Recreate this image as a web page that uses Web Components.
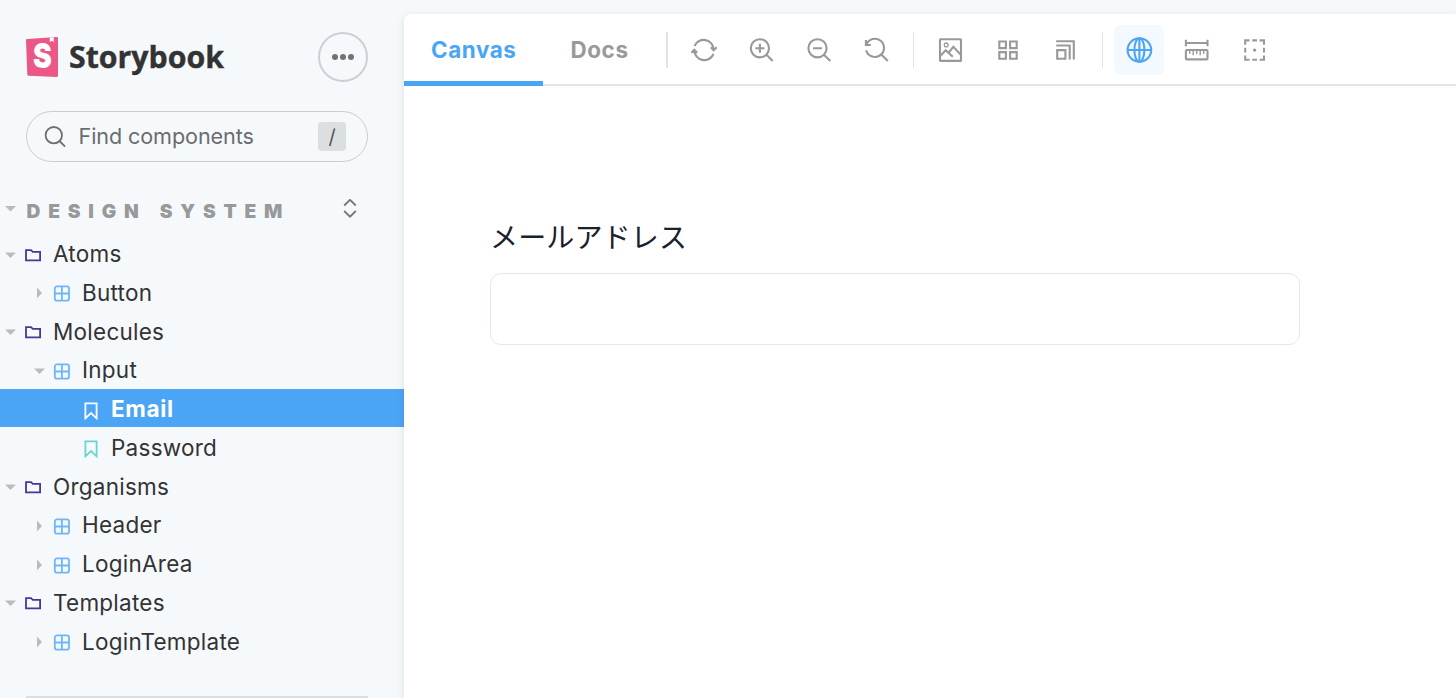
<!DOCTYPE html>
<html lang="ja">
<head>
<meta charset="utf-8">
<title>Storybook</title>
<style>
html,body{margin:0;height:100%;overflow:hidden;background:#f6f9fc}
body{font-family:Inter,"Noto Sans CJK JP",sans-serif;color:#333}
</style>
</head>
<body>
<sb-app>
  <sb-sidebar slot="sidebar">
    <sb-row kind="folder" open>Atoms</sb-row>
    <sb-row kind="component" level="1">Button</sb-row>
    <sb-row kind="folder" open>Molecules</sb-row>
    <sb-row kind="component" level="1" open>Input</sb-row>
    <sb-row kind="story" level="2" selected>Email</sb-row>
    <sb-row kind="story" level="2">Password</sb-row>
    <sb-row kind="folder" open>Organisms</sb-row>
    <sb-row kind="component" level="1">Header</sb-row>
    <sb-row kind="component" level="1">LoginArea</sb-row>
    <sb-row kind="folder" open>Templates</sb-row>
    <sb-row kind="component" level="1">LoginTemplate</sb-row>
  </sb-sidebar>
  <sb-toolbar slot="toolbar"></sb-toolbar>
  <sb-field slot="canvas">メールアドレス</sb-field>
</sb-app>
<script>
const define = (name, render) => customElements.define(name, class extends HTMLElement {
  connectedCallback() {
    if (this.shadowRoot) return;
    this.attachShadow({mode: 'open'}).innerHTML = render(this);
  }
});

const toolIcons = {
  sync: '<path d="M4.5 10A10 10 0 0 1 23.7 14M20.8 11.3l2.9 3 2.9-3M23.5 18A10 10 0 0 1 4.3 14M1.4 16.7l2.9-3 2.9 3"/>',
  zoomin: '<circle cx="11.9" cy="12.3" r="9.1"/><path d="M18.4 18.8l6.3 6.3M7.4 12.3h9M11.9 7.8v9"/>',
  zoomout: '<circle cx="12.5" cy="12.3" r="9.1"/><path d="M19 18.8l6.3 6.3M8 12.3h9"/>',
  zoomreset: '<path d="M3.4 8.6A9.1 9.1 0 1 1 3.1 14.2M2.9 4v5h5M18.5 18.8l6.3 6.3"/>',
  photo: '<rect x="3" y="3.3" width="21" height="21.6" rx=".5"/><circle cx="9.2" cy="8.9" r="1.9" stroke-width="1.3"/><path d="M3 20.2l5.7-6 7.1 6.6M11.7 16.5l4.7-5.6 7.4 8"/>',
  grid: '<path d="M5.3 5.5h6.6v6.6H5.3zM16.1 5.5h6.6v6.6h-6.6zM5.3 16.1h6.6v6.6H5.3zM16.1 16.1h6.6v6.6h-6.6z"/>',
  grow: '<path d="M5.2 14.1h8.2v8.6H5.2zM4.2 9.5h13.5v14M4.2 5.2h17.6v18.3"/>',
  globe: '<circle cx="14.4" cy="14" r="11.8"/><ellipse cx="14.4" cy="14" rx="5" ry="11.8"/><path d="M2.5 14h23.8M14.4 2v24"/>',
  ruler: '<path d="M2.9 7h21.6M2.9 3.8v6.4M24.5 3.8v6.4"/><rect x="2.9" y="14" width="21.6" height="9.4" rx="1"/><path stroke-width="1.4" d="M6.7 15v3M10.2 15v4.2M13.7 15v3M17.2 15v4.2M20.7 15v3"/>',
  outline: '<path d="M5.2 8.8V4.4h4.4M19.6 4.4H24v4.4M24 19.4v4.4h-4.4M9.6 23.8H5.2v-4.4M12.2 4.4H17M12.2 23.8H17M5.2 11.7v4.8M24 11.7v4.8"/><circle cx="14.6" cy="14.1" r="1.7" fill="currentColor" stroke="none"/>'
};

define('sb-tool', el => `
<style>
:host{display:flex;align-items:center;justify-content:center;width:50px;height:50px;border-radius:7px;color:#999}
:host([active]){background:#f3f9ff;color:#4ba5f7}
svg{fill:none;stroke:currentColor;stroke-width:2.1}
</style><svg width="28" height="28">${toolIcons[el.getAttribute('icon')]}</svg>`);

define('sb-toolbar', () => `
<style>
:host{display:flex;height:72px;box-sizing:border-box;border-bottom:2px solid #e3e5e7;align-items:flex-start}
.tab{box-sizing:border-box;height:72px;padding:4px 0 0 27px;display:flex;align-items:center;color:#999;font-weight:700;font-size:22.4px;letter-spacing:.6px;border-bottom:5px solid transparent;white-space:nowrap}
.canvas{width:139px;color:#4ba5f7;border-color:#4ba5f7}
.docs{width:123px;padding-left:27.5px}
i{width:1px;height:36px;margin-top:18px;background:#e3e3e3}
.first{width:2px}
.g{display:flex;gap:7.6px;padding-top:11px}
.g1{margin-left:11px}.g2{margin-left:12px}.g3{margin-left:11px}
</style>
<div class="tab canvas">Canvas</div><div class="tab docs">Docs</div><i class="first"></i>
<div class="g g1"><sb-tool icon="sync"></sb-tool><sb-tool icon="zoomin"></sb-tool><sb-tool icon="zoomout"></sb-tool><sb-tool icon="zoomreset"></sb-tool></div><i style="margin-left:11px"></i>
<div class="g g2"><sb-tool icon="photo"></sb-tool><sb-tool icon="grid"></sb-tool><sb-tool icon="grow"></sb-tool></div><i style="margin-left:11px"></i>
<div class="g g3"><sb-tool icon="globe" active></sb-tool><sb-tool icon="ruler"></sb-tool><sb-tool icon="outline"></sb-tool></div>`);

define('sb-field', () => `
<style>
:host{display:block;padding:129px 86px 0}
label{display:block;font:400 28px/42px "Noto Sans CJK JP",sans-serif;color:#1a202c;height:42px;letter-spacing:.15px;white-space:nowrap}
input{display:block;box-sizing:border-box;width:810px;height:72px;margin:16px 0 0;border:1px solid #e2e8f0;border-radius:11px;background:#fff;outline:none}
</style><label for="mail"><slot></slot></label><input id="mail" type="email">`);

const rowIcons = {
  folder: '<svg width="18" height="16"><path d="M2 3.2h5l1.8 1.7h7.3v8.5H2z"/></svg>',
  component: '<svg width="18" height="18"><rect x="1.8" y="2.4" width="14.2" height="14.2" rx="2.2"/><path d="M8.9 2.3v14.4M1.8 9.5H16"/></svg>',
  story: '<svg width="18" height="20"><path d="M3.4 3.4h11.2v14.9L9 13.1l-5.6 5.2z"/></svg>'
};
define('sb-row', el => {
  const lv = +(el.getAttribute('level') || 0), open = el.hasAttribute('open'), kind = el.getAttribute('kind');
  const arrow = kind === 'story' ? '' : open ? '<path d="M0 3.4h11L5.5 8.9z"/>' : '<path d="M3 .5v11L8 6z"/>';
  return `
<style>
:host{display:flex;align-items:center;height:38.78px;padding-left:${5 + lv * 29}px;font-size:22.5px;letter-spacing:.25px;white-space:nowrap;color:#333}
:host([selected]){background:linear-gradient(#4ba5f7,#4ba5f7) 0 0/100% 38px no-repeat;color:#fff;font-weight:700;letter-spacing:.65px}
.a{width:11px;height:12px;fill:#b9bbbd;margin:2px 8px 0 0}
.i{display:flex;width:18px;margin:2px 11px 0 0}
.i svg{fill:none;stroke-width:1.8}
:host([kind=folder]) .i svg{stroke:#4a3698}
:host([kind=component]) .i svg{stroke:#6db6fa}
:host([kind=story]) .i svg{stroke:#66d5d1}
:host([selected]) .i svg{stroke:#fff}
</style><svg class="a">${arrow}</svg><span class="i">${rowIcons[kind]}</span><span><slot></slot></span>`;
});

define('sb-sidebar', () => `
<style>
:host{display:block;width:404px;height:698px}
.head{display:flex;align-items:center;justify-content:space-between;padding:32px 36px 0 26px;height:50px}
.menu{box-sizing:border-box;width:50px;height:50px;border:2px solid #ccd0d4;border-radius:50%;display:flex;align-items:center;justify-content:center;gap:2px}
.menu b{width:6px;height:6px;border-radius:50%;background:#707274}
.search{box-sizing:border-box;display:flex;align-items:center;margin:29px 36px 0 26px;height:51px;border:1px solid #c9cdd0;border-radius:26px;padding:0 21px 0 17px;color:#6b6c6d;font-size:21.6px;letter-spacing:-.1px}
.search span{flex:1;margin:-1px 0 0 11.5px}
kbd{width:28px;height:29px;border-radius:4px;background:#dcdfe2;display:flex;align-items:center;justify-content:center;font:20px Inter,sans-serif;color:#555}
.title{display:flex;align-items:center;height:30px;margin:32px 47px 10.2px 5px;color:#999;font-weight:900;font-size:19.2px;letter-spacing:7.8px;word-spacing:1.5px;white-space:nowrap}
.title span{flex:1;margin-left:10.5px;padding-top:3px}
hr{border:0;height:2px;background:#dcdfe2;margin:35.4px 36px 0 26px}
</style>
<div class="head">
<svg width="204" height="44" viewBox="0 0 204 44">
<g transform="translate(0 1)"><path fill="#eb5786" d="M0 4.2Q0 3.2 1 3.1L30.6 1Q32 1 32 2.2V39.7Q32 41 30.6 41L2.6 39.8Q1.4 39.7 1.3 38.5z"/>
<path fill="#fff" d="M23.8 1.5l3.8-.3.2 5-1.800-1.400-2.300 1.300z"/>
<text x="7" y="32.200" textLength="18.800" lengthAdjust="spacingAndGlyphs" font-family="Inter,sans-serif" font-weight="900" font-size="34" fill="#fff">S</text></g>
<text x="43" y="33" textLength="155" lengthAdjust="spacingAndGlyphs" font-family="Open Sans,sans-serif" font-weight="700" font-size="30" fill="#333" stroke="#333" stroke-width=".4">Storybook</text>
</svg>
<div class="menu"><b></b><b></b><b></b></div></div>
<div class="search"><svg width="23" height="23" fill="none" stroke="#6d6f70" stroke-width="1.8"><circle cx="9.8" cy="10.2" r="8.2"/><path d="M15.5 16l5.6 5.6"/></svg><span>Find components</span><kbd>/</kbd></div>
<div class="title"><svg width="11" height="8" fill="#b9bbbd"><path d="M0 1h11L5.5 6.5z"/></svg><span>DESIGN SYSTEM</span><svg width="14" height="20" fill="none" stroke="#777" stroke-width="1.8"><path d="M1.2 6.5L7 .8l5.800 5.700M1.200 12L7 17.700l5.800-5.700"/></svg></div>
<slot></slot><hr>`);

define('sb-app', () => `
<style>
:host{display:flex;width:1456px;height:698px;overflow:hidden}
main{flex:1;min-width:0;margin-top:14px;background:#fff;border-radius:7px 0 0 0;box-shadow:0 2px 9px rgba(0,0,0,.1)}
</style><slot name="sidebar"></slot><main><slot name="toolbar"></slot><slot name="canvas"></slot></main>`);
</script>
</body>
</html>
